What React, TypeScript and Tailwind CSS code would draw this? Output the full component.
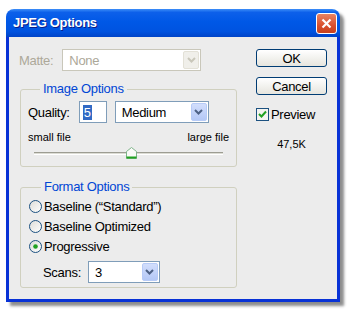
import React from "react";

const FONT = "font-['Liberation_Sans',Arial,sans-serif]";

function Chevron({ color }: { color: string }) {
  return (
    <svg width="9" height="6" viewBox="0 0 9 6">
      <polyline points="1,1 4.5,4.5 8,1" fill="none" stroke={color} strokeWidth="2" />
    </svg>
  );
}

function Combo({ value, className, disabled }: { value: string; className: string; disabled?: boolean }) {
  return (
    <div
      className={`flex items-center h-[22px] border p-[1px] bg-white ${
        disabled ? "border-[#c9c7ba]" : "border-[#7f9db9]"
      } ${className}`}
    >
      <span className={`flex-1 pl-[5px] text-[13px] tracking-[-0.3px] leading-none ${disabled ? "text-[#aca899]" : "text-black"}`}>
        {value}
      </span>
      <div
        className={`w-[16px] h-full flex items-center justify-center rounded-[2px] ${
          disabled
            ? "bg-[#f0efea] border border-[#e3e1d7]"
            : "bg-gradient-to-b from-[#d2defc] to-[#b4c8f6] border border-[#b7cbf7]"
        }`}
      >
        <Chevron color={disabled ? "#c9c7ba" : "#4d6185"} />
      </div>
    </div>
  );
}

function Radio({ checked, label }: { checked?: boolean; label: string }) {
  return (
    <div className="flex items-center h-[20px] gap-[2px]">
      <svg width="13" height="13" viewBox="0 0 13 13">
        <defs>
          <linearGradient id="rg" x1="0" y1="0" x2="1" y2="1">
            <stop offset="0" stopColor="#dcdcd7" />
            <stop offset="1" stopColor="#ffffff" />
          </linearGradient>
        </defs>
        <circle cx="6.5" cy="6.5" r="6" fill="url(#rg)" stroke="#1c5180" strokeWidth="1" />
        {checked && <circle cx="6.5" cy="6.5" r="2.3" fill="#21a121" />}
      </svg>
      <span className="text-[13px] tracking-[-0.3px] leading-none">{label}</span>
    </div>
  );
}

function Button({ label }: { label: string }) {
  return (
    <div className="w-[71px] h-[18px] flex items-center justify-center rounded-[3px] border border-[#003c74] bg-gradient-to-b from-white to-[#e6e5de] text-[13px] tracking-[-0.3px] leading-none">
      {label}
    </div>
  );
}

export default function App() {
  return (
    <div className={`w-[351px] h-[320px] bg-white pt-[9px] pl-[6px] ${FONT}`}>
      <div className="w-[334px] h-[293px] flex flex-col rounded-t-[8px] shadow-[4px_4px_3px_rgba(0,0,0,0.45)]">
        {/* title bar */}
        <div className="h-[28px] shrink-0 flex items-center justify-between pl-[7px] pr-[3px] rounded-t-[8px] bg-[linear-gradient(to_bottom,#3d8ef8_0%,#0d60ea_12%,#0058e6_45%,#0053e0_80%,#0044c8_100%)]">
          <span className="text-white font-bold text-[13px] tracking-[-0.3px] [text-shadow:1px_1px_0_#0a1e8a]">
            JPEG Options
          </span>
          <div className="w-[21px] h-[21px] mt-[1px] rounded-[3px] border border-white bg-[linear-gradient(to_bottom,#e98464,#d9502e_60%,#c8401c)] flex items-center justify-center">
            <svg width="11" height="11" viewBox="0 0 11 11">
              <path d="M1.5 1.5 L9.5 9.5 M9.5 1.5 L1.5 9.5" stroke="white" strokeWidth="2.2" />
            </svg>
          </div>
        </div>

        {/* body */}
        <div className="flex-1 flex border-x-[3px] border-b-[3px] border-[#0832d6] bg-[#ececec] text-black text-[13px] tracking-[-0.3px]">
          <div className="w-[247px] flex flex-col">
            <div className="flex items-center mt-[12px] pl-[10px] gap-[9px]">
              <span className="text-[#aca899] leading-none">Matte:</span>
              <Combo value="None" className="w-[139px]" disabled />
            </div>

            <fieldset className="ml-[11px] w-[217px] mt-[11px] border border-[#d0d0bf] rounded-[3px] px-[7px] pb-[7px]">
              <legend className="ml-[12px] px-[3px] leading-[14px] text-[#0046d5]">Image Options</legend>
              <div className="flex items-center mt-[5px]">
                <span className="leading-none">Quality:</span>
                <div className="ml-[9px] w-[28px] h-[22px] border border-[#7f9db9] bg-white flex items-center pl-[3px]">
                  <span className="bg-[#316ac5] text-white leading-[15px] px-[1px]">5</span>
                </div>
                <Combo value="Medium" className="ml-[8px] w-[94px]" />
              </div>
              <div className="flex justify-between mt-[8px] text-[11px] tracking-normal leading-[12px]">
                <span>small file</span>
                <span>large file</span>
              </div>
              <div className="relative mt-[4px] h-[12px] mx-[6px]">
                <div className="absolute left-0 right-0 top-[5px] h-[3px] border-t border-[#9d9d92] border-b border-b-white bg-[#dcdcd4]" />
                <svg className="absolute left-[92px] top-0" width="11" height="12" viewBox="0 0 11 12">
                  <path d="M0.5 4.5 L5.5 0.5 L10.5 4.5 V11.5 H0.5 Z" fill="#fafaf8" stroke="#7fb58a" />
                  <rect x="0.5" y="9.5" width="10" height="2" fill="#21a121" />
                </svg>
              </div>
            </fieldset>

            <fieldset className="ml-[11px] w-[217px] mt-[13px] border border-[#d0d0bf] rounded-[3px] px-[8px] pb-[4px]">
              <legend className="ml-[12px] px-[3px] leading-[14px] text-[#0046d5]">Format Options</legend>
              <div className="mt-[2px] flex flex-col">
                <Radio label="Baseline (“Standard”)" />
                <Radio label="Baseline Optimized" />
                <Radio label="Progressive" checked />
              </div>
              <div className="flex items-center mt-[5px] pl-[14px] gap-[7px]">
                <span className="leading-none">Scans:</span>
                <Combo value="3" className="w-[72px]" />
              </div>
            </fieldset>
          </div>

          <div className="w-[71px] flex flex-col items-center pt-[12px]">
            <Button label="OK" />
            <div className="mt-[10px]">
              <Button label="Cancel" />
            </div>
            <div className="self-start flex items-center mt-[13px] gap-[2px]">
              <svg width="13" height="13" viewBox="0 0 13 13">
                <rect x="0.5" y="0.5" width="12" height="12" fill="#f4f4f0" stroke="#1c5180" />
                <polyline points="3,6 5.5,8.5 10,3.5" fill="none" stroke="#21a121" strokeWidth="2" />
              </svg>
              <span className="leading-none">Preview</span>
            </div>
            <span className="mt-[18px] text-[11px] tracking-normal leading-none">47,5K</span>
          </div>
        </div>
      </div>
    </div>
  );
}
